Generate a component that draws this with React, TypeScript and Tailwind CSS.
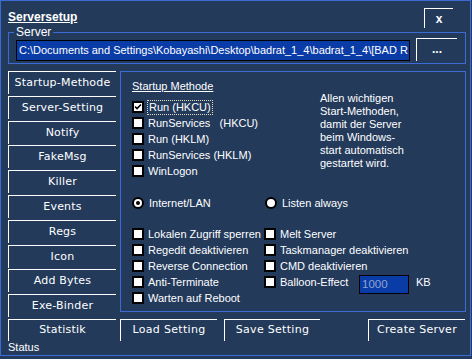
import React from "react";

const BG = "bg-[#233a5b]";

function Check({ checked = false }: { checked?: boolean }) {
  return (
    <span className="relative inline-block w-[12px] h-[12px] shrink-0 border-2 border-black bg-white">
      {checked && (
        <svg viewBox="0 0 8 8" className="absolute left-0 top-0 w-[8px] h-[8px]">
          <path d="M1 3.5 L3 5.5 L7 1.5" stroke="black" strokeWidth="1.6" fill="none" />
        </svg>
      )}
    </span>
  );
}

function Radio({ checked = false }: { checked?: boolean }) {
  return (
    <span className="relative inline-flex items-center justify-center w-[12px] h-[12px] shrink-0 rounded-full border-2 border-black bg-white">
      {checked && <span className="block w-[4px] h-[4px] rounded-full bg-black" />}
    </span>
  );
}

function CheckRow({ label, checked = false, focus = false }: { label: string; checked?: boolean; focus?: boolean }) {
  return (
    <div className="flex items-center h-[16px]">
      <Check checked={checked} />
      {focus ? (
        <span className="ml-[3px] px-[1px] leading-[13px] border border-dotted border-[#e8dcc0] whitespace-pre">{label}</span>
      ) : (
        <span className="ml-[4px] whitespace-pre">{label}</span>
      )}
    </div>
  );
}

function Tab({ label, h = "h-[25px]" }: { label: string; h?: string }) {
  return (
    <div className={`${h} shrink-0`}>
      <div className="h-[23px] border-t border-l border-white flex items-center justify-center font-['DejaVu_Sans',sans-serif] text-[11px] tracking-[0.2px] text-white">
        {label}
      </div>
    </div>
  );
}

function BtnBox({ label, w }: { label: string; w: string }) {
  return (
    <div className={`${w} h-[22px] border-t border-l border-white flex items-center justify-center font-['DejaVu_Sans',sans-serif] text-[11px] tracking-[0.3px] text-white`}>
      {label}
    </div>
  );
}

export default function App() {
  return (
    <div className={`w-[472px] h-[359px] ${BG} font-['Liberation_Sans',Arial,sans-serif] text-[11px] text-white`}>
      <div className="w-[471px] h-[356px] border border-[#3a6bd6] flex flex-col">
        {/* header */}
        <div className="flex items-start h-[26px] pt-[7px]">
          <div className="ml-[7px] text-[12px] font-bold underline leading-[14px] mt-[2px]">Serversetup</div>
          <div className="ml-auto mr-[17px] w-[29px] h-[20px] border-t border-l border-white flex items-center justify-center text-[12px] font-bold">
            x
          </div>
        </div>

        {/* server fieldset */}
        <fieldset className="ml-[7px] w-[458px] h-[40px] border border-[#3a6bd6] -mt-[1px]">
          <legend className="ml-[5px] px-[2px] text-[12px] leading-[13px]">Server</legend>
          <div className="flex items-start pl-[7px] -mt-[1px]">
            <div className="mt-[2px] w-[394px] h-[21px] bg-[#0a3ca8] border border-black flex items-center pl-[2px] whitespace-nowrap text-[11px]">
              C:\Documents and Settings\Kobayashi\Desktop\badrat_1_4\badrat_1_4\[BAD R
            </div>
            <div className="ml-[6px] w-[41px] h-[23px] border-t border-l border-white flex items-center justify-center font-bold text-[12px] leading-none pb-[2px]">
              ...
            </div>
          </div>
        </fieldset>

        {/* main */}
        <div className="flex mt-[7px] ml-[7px]">
          {/* tabs */}
          <div className="w-[108px] flex flex-col">
            <Tab label="Startup-Methode" />
            <Tab label="Server-Setting" />
            <Tab label="Notify" h="h-[24px]" />
            <Tab label="FakeMsg" />
            <Tab label="Killer" />
            <Tab label="Events" />
            <Tab label="Regs" />
            <Tab label="Icon" h="h-[24px]" />
            <Tab label="Add Bytes" />
            <Tab label="Exe-Binder" />
            <div className="h-[22px] border-t border-l border-white flex items-center justify-center font-['DejaVu_Sans',sans-serif] text-[11px] tracking-[0.2px]">
              Statistik
            </div>
          </div>

          {/* right side */}
          <div className="ml-[4px] flex flex-col">
            <div className="w-[346px] h-[241px] border border-[#3a6bd6] pl-[11px] pt-[7px]">
              <div className="grid grid-cols-[188px_1fr]">
                <div>
                  <div className="underline leading-[14px]">Startup Methode</div>
                  <div className="mt-[6px]">
                    <CheckRow label="Run (HKCU)" checked focus />
                    <CheckRow label="RunServices   (HKCU)" />
                    <CheckRow label="Run (HKLM)" />
                    <CheckRow label="RunServices (HKLM)" />
                    <CheckRow label="WinLogon" />
                  </div>
                </div>
                <div className="pt-[13px] leading-[13px]">
                  Allen wichtigen<br />Start-Methoden,<br />damit der Server<br />beim Windows-<br />start automatisch<br />gestartet wird.
                </div>
              </div>

              <div className="grid grid-cols-[133px_1fr] mt-[16px]">
                <div className="flex items-center h-[16px]">
                  <Radio checked />
                  <span className="ml-[5px]">Internet/LAN</span>
                </div>
                <div className="flex items-center h-[16px]">
                  <Radio />
                  <span className="ml-[5px]">Listen always</span>
                </div>
              </div>

              <div className="grid grid-cols-[132px_1fr] mt-[15px]">
                <div>
                  <CheckRow label="Lokalen Zugriff sperren" />
                  <CheckRow label="Regedit deaktivieren" />
                  <CheckRow label="Reverse Connection" />
                  <CheckRow label="Anti-Terminate" />
                  <CheckRow label="Warten auf Reboot" />
                </div>
                <div>
                  <CheckRow label="Melt Server" />
                  <CheckRow label="Taskmanager deaktivieren" />
                  <CheckRow label="CMD deaktivieren" />
                  <div className="flex items-center h-[16px]">
                    <Check />
                    <span className="ml-[4px] w-[79px]">Balloon-Effect</span>
                    <div className="w-[50px] h-[19px] bg-[#0a3ca8] border border-black flex items-center pl-[2px] text-[#8ea4d0] text-[11.5px] mt-[5px]">
                      1000
                    </div>
                    <span className="ml-[7px]">KB</span>
                  </div>
                </div>
              </div>
            </div>

            <div className="flex mt-[7px]">
              <BtnBox label="Load Setting" w="w-[97px]" />
              <div className="ml-[7px]">
                <BtnBox label="Save Setting" w="w-[96px]" />
              </div>
              <div className="ml-[48px]">
                <BtnBox label="Create Server" w="w-[97px]" />
              </div>
            </div>
          </div>
        </div>

        <div className="ml-[7px] mt-auto mb-[1px] leading-[13px]">Status</div>
      </div>
    </div>
  );
}
